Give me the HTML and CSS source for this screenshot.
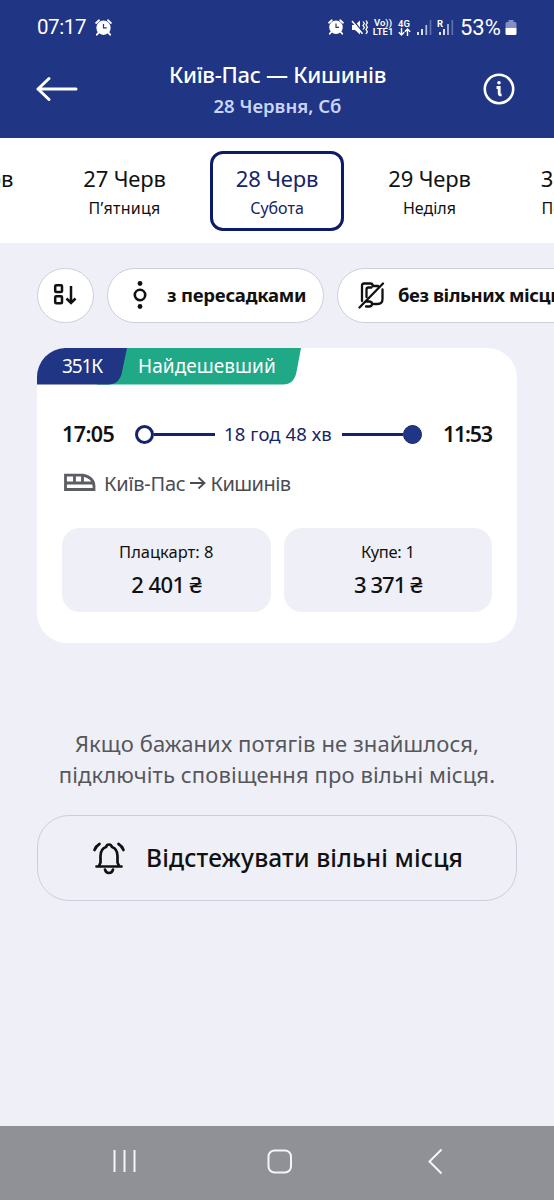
FILE: index.html
```html
<!DOCTYPE html>
<html lang="uk">
<head>
<meta charset="utf-8">
<title>Київ-Пас — Кишинів</title>
<link rel="stylesheet" href="styles.css">
</head>
<body>
<svg class="defs" width="0" height="0" aria-hidden="true">
  <symbol id="alarm" viewBox="0 0 18 18">
    <circle cx="9" cy="9.3" r="7.6" fill="#fff"/>
    <path d="M1.2 4.2 4.3 1.4M16.8 4.2 13.7 1.4M3.6 14.6 2 16.6M14.4 14.6 16 16.6" stroke="#fff" stroke-width="2" stroke-linecap="round"/>
    <path d="M9 5.200v4.300h3.400" fill="none" stroke="#203583" stroke-width="1.300"/>
  </symbol>
</svg>
<div class="screen">
  <header class="top">
    <div class="status">
      <span class="clock">07:17</span>
      <svg class="alarm" width="17" height="17"><use href="#alarm"/></svg>
      <div class="status-right">
        <svg width="16" height="16"><use href="#alarm"/></svg>
        <svg class="mute" width="17" height="17" viewBox="0 0 17 17">
          <path d="M1 6h3l5-4.500v14L4 11H1z" fill="#fff"/>
          <path d="M2 1 12 13.500" stroke="#203583" stroke-width="1.300"/>
          <path d="M1 2 11.500 14.800" stroke="#fff" stroke-width="1.500"/>
          <path d="M12 2.500l1.400 2-1.400 2 1.400 2-1.400 2M15 1.500l1.400 2.200L15 6l1.400 2.200L15 10.500l1.400 2.200L15 15" fill="none" stroke="#fff" stroke-width="1.300"/>
        </svg>
        <span class="mini lte"><b>Vo))</b><b>LTE1</b></span>
        <span class="mini net"><b>4G</b>
          <svg width="13" height="8" viewBox="0 0 13 8"><path d="M3.500 0v7M.8 4.300 3.500 7l2.700-2.700M9.500 8V1M6.800 3.700 9.500 1l2.700 2.700" fill="none" stroke="#fff" stroke-width="1.400"/></svg>
        </span>
        <svg class="signal" width="15" height="17" viewBox="0 0 15 17"><path d="M1 13v3M5 10v6" stroke="#fff" stroke-width="1.700"/><path d="M9.300 6v10" stroke="#b5bfe0" stroke-width="1.700"/><path d="M13.500 1v15" stroke="#5d70ae" stroke-width="1.700"/></svg>
        <svg class="roam" width="17" height="17" viewBox="0 0 17 17"><text x="0" y="8" class="r">R</text><path d="M3 13v3M7 10v6" stroke="#fff" stroke-width="1.700"/><path d="M11 5v11" stroke="#b5bfe0" stroke-width="1.700"/><path d="M15.300 1v15" stroke="#5d70ae" stroke-width="1.700"/></svg>
        <span class="percent">53%</span>
        <svg width="12" height="17" viewBox="0 0 12 17"><path d="M3.500 1h5v2H10a1.500 1.500 0 0 1 1.500 1.500V9H.5V4.500A1.500 1.500 0 0 1 2 3h1.500z" fill="#8190c8"/><path d="M.5 9h11v5.500a1.500 1.500 0 0 1-1.500 1.500H2a1.500 1.500 0 0 1-1.500-1.500z" fill="#fff"/></svg>
      </div>
    </div>
    <div class="nav">
      <svg class="back" width="42" height="26" viewBox="0 0 42 26"><path d="M40 13H2M13 2.500 2 13l11 10.500" fill="none" stroke="#fff" stroke-width="3" stroke-linecap="round" stroke-linejoin="round"/></svg>
      <div class="titles">
        <div class="title">Київ-Пас — Кишинів</div>
        <div class="subtitle">28 Червня, Сб</div>
      </div>
      <svg class="info" width="32" height="32" viewBox="0 0 32 32"><circle cx="16" cy="16" r="14.200" fill="none" stroke="#fff" stroke-width="2.600"/><circle cx="16" cy="9.800" r="1.800" fill="#fff"/><path d="M13.500 14.500h2.700v6.300q0 1.200 2.400 1" fill="none" stroke="#fff" stroke-width="2.800"/></svg>
    </div>
  </header>
  <nav class="dates">
    <div class="date"><span class="day">26 Черв</span><span class="week">Четвер</span></div>
    <div class="date"><span class="day">27 Черв</span><span class="week narrow">П’ятниця</span></div>
    <div class="date active"><span class="day">28 Черв</span><span class="week">Субота</span></div>
    <div class="date"><span class="day">29 Черв</span><span class="week">Неділя</span></div>
    <div class="date"><span class="day">30 Черв</span><span class="week">Понеділок</span></div>
  </nav>
  <div class="filters">
    <div class="chip sort"><svg width="24" height="24" viewBox="0 0 24 24" fill="none" stroke="#111" stroke-width="2.500"><rect x="2.200" y="2.200" width="6.800" height="6.800" rx="1"/><rect x="2.200" y="13.200" width="6.800" height="7" rx="1"/><path d="M18 3v17M13.500 15.500l4.500 4.500 4.500-4.500"/></svg></div>
    <div class="chip transfer"><svg width="14" height="30" viewBox="0 0 14 30"><circle cx="7" cy="15" r="5.200" fill="none" stroke="#111" stroke-width="2.600"/><circle cx="7" cy="3.500" r="2.400" fill="#111"/><circle cx="7" cy="26.500" r="2.400" fill="#111"/></svg><span>з пересадками</span></div>
    <div class="chip noseat"><svg width="28" height="28" viewBox="0 0 28 28" fill="none" stroke="#111" stroke-width="2.300" stroke-linecap="round" stroke-linejoin="round"><path d="M5 20V4.500Q5 2.500 7 2.500h6.500Q15.500 2.500 16 5h5M9.500 16V8.500Q9.500 6.500 11.500 6.500h3M25.500 8.500V18q0 5-5 5H16.500M8.500 20.500h3.500q3 0 3 2.500t-3 2.500H9M2.500 26.500 26 2.500"/></svg><span>без вільних місць</span></div>
  </div>
  <section class="card">
    <svg class="tagshape" width="264" height="37" viewBox="0 0 264 37"><path d="M60 0h204l-4.500 24Q257 36.500 246 36.500H60z" fill="#20a987"/><path d="M28 0h62l-5 24Q82.500 36.500 71 36.500H0V29A29 29 0 0 1 28 0z" fill="#203583"/></svg>
    <div class="tags"><span class="num">351К</span><span class="cheap">Найдешевший</span></div>
    <div class="trip">
      <span class="time">17:05</span>
      <i class="dot open"></i><i class="line"></i>
      <span class="dur">18 год 48 хв</span>
      <i class="line"></i><i class="dot"></i>
      <span class="time end">11:53</span>
    </div>
    <div class="route">
      <svg width="32" height="20" viewBox="0 0 32 20" fill="none" stroke="#5c5e63" stroke-width="2.800"><path d="M1.500 2.200H19Q30 4.500 30 13.500V16.500H1.500zM1.500 10H29.500M10.500 2v8M18.500 2v8"/></svg>
      <span class="from">Київ-Пас</span>
      <svg class="arrow" width="16" height="14" viewBox="0 0 16 14" fill="none" stroke="#4b4c51" stroke-width="1.800"><path d="M0 7h14.500M8.500 1.500 14.500 7l-6 5.500"/></svg>
      <span class="to">Кишинів</span>
    </div>
    <div class="seats">
      <div class="seat"><span class="kind">Плацкарт: 8</span><span class="price">2 401 ₴</span></div>
      <div class="seat"><span class="kind k2">Купе: 1</span><span class="price p2">3 371 ₴</span></div>
    </div>
  </section>
  <p class="note">Якщо бажаних потягів не знайшлося,<br>підключіть сповіщення про вільні місця.</p>
  <div class="watch">
    <svg width="34" height="34" viewBox="0 0 34 34" fill="none" stroke="#111" stroke-width="2.700" stroke-linecap="round" stroke-linejoin="round"><path d="M4.500 25.500h25M7 25l1.500-3.500V15Q8.500 8 14 6q.8-2.500 3-2.500t3 2.500Q25.500 8 25.500 15v6.500L27 25M13 28.500q.8 3.500 4 3.500t4-3.500M2.500 9Q4 5 7.500 3M31.500 9Q30 5 26.500 3"/></svg>
    <span>Відстежувати вільні місця</span>
  </div>
  <footer class="sys">
    <svg width="554" height="74" viewBox="0 0 554 74" fill="none" stroke="#f4f5f8"><path d="M114.500 24v22M124.500 24v22M134.500 24v22" stroke-width="2"/><rect x="268.500" y="24.500" width="22.500" height="22" rx="6" stroke-width="2"/><path d="M441.500 23.500 429.500 35.500l12 12" stroke-width="2"/></svg>
  </footer>
</div>
</body>
</html>
```
FILE: styles.css
```css
* { box-sizing: border-box; }
body { margin: 0; font-family: "Noto Sans", "Open Sans", sans-serif; color: #111; }
.defs { display: block; }
.screen { width: 554px; height: 1200px; overflow: hidden; background: #eff0f7; display: flex; flex-direction: column; white-space: nowrap; }
.screen svg { flex: none; display: block; }
.top { height: 138px; flex: none; background: #203583; color: #fff; }
.status { height: 54px; padding: 0 37px; display: flex; align-items: center; font-family: Roboto, sans-serif; }
.clock { font-size: 20.500px; letter-spacing: -0.4px; margin-right: 9px; }
.status-right { margin-left: auto; display: flex; align-items: center; }
.mute { margin: 0 5px 0 7px; }
.mini { display: flex; flex-direction: column; align-items: center; font-size: 9.500px; line-height: 9px; }
.mini b { font-weight: 600; }
.lte { width: 20px; }
.net { width: 14px; margin: 0 6px 0 4px; }
.roam { margin: 0 6px 0 5px; }
.r { font: 700 9.500px Roboto, sans-serif; fill: #fff; }
.percent { font-size: 22px; width: 42px; margin-right: 3px; }
.nav { height: 84px; padding: 0 39px 0 36px; display: grid; grid-template-columns: 1fr auto 1fr; align-items: start; }
.back { margin-top: 22px; }
.info { margin-top: 19px; justify-self: end; }
.titles { text-align: center; padding-left: 4px; }
.title { font-size: 22px; line-height: 30px; margin-top: 5px; font-weight: 500; letter-spacing: -0.26px; }
.subtitle { font-size: 18.500px; line-height: 26px; margin-top: 4px; font-weight: 600; color: #c9d4fa; }
.dates { height: 105px; flex: none; background: #fff; padding-top: 13px; display: flex; justify-content: center; gap: 18.500px; }
.date { flex: none; width: 134px; height: 80px; border-radius: 13px; display: flex; flex-direction: column; align-items: center; padding-top: 11px; }
.active { border: 3px solid #0c1c68; padding-top: 8px; color: #162468; }
.day { font-size: 22px; line-height: 32px; letter-spacing: -0.15px; }
.week { font-size: 16px; line-height: 24px; margin-top: 2px; }
.narrow { letter-spacing: 0.25px; }
.filters { padding: 24.500px 0 0 37px; display: flex; gap: 13px; flex: none; }
.chip { flex: none; height: 55.500px; border: 1.500px solid #cccedd; border-radius: 28px; background: #fff; display: flex; align-items: center; font-size: 18.500px; font-weight: 700; letter-spacing: -0.22px; }
.chip span { margin-top: -2px; }
.sort { width: 56.500px; padding-left: 15px; }
.transfer { width: 217.500px; padding-left: 25px; gap: 20.500px; }
.noseat { width: 260px; padding-left: 19px; gap: 13px; letter-spacing: -0.42px; }
.card { margin: 25px 37px 0; height: 295px; border-radius: 30px; background: #fff; flex: none; display: grid; grid-template-rows: 37px auto auto auto; align-content: start; }
.tagshape, .tags { grid-row: 1; grid-column: 1; }
.tags { display: flex; align-items: center; color: #fff; font-size: 19px; padding: 0 0 2px 25px; z-index: 1; }
.num { width: 76px; letter-spacing: -1.100px; }
.cheap { letter-spacing: 0.05px; }
.trip { margin: 33px 25px 0; height: 32px; display: flex; align-items: center; }
.time { font-size: 21.500px; font-weight: 600; width: 73px; letter-spacing: -0.6px; margin-top: -1px; }
.end { width: 49px; margin-left: 21px; letter-spacing: -1.300px; }
.dot { width: 19px; height: 19px; border-radius: 50%; background: #203583; border: 1px solid #15236c; flex: none; }
.open { background: #fff; border: 3px solid #14236c; }
.line { height: 3px; background: #15236c; flex: 1; }
.dur { font-size: 18.500px; color: #162468; margin: -1px 10px 0 9px; letter-spacing: 0.1px; }
.route { margin: 18px 27px 0; height: 30px; display: flex; align-items: center; font-size: 20px; color: #4b4c51; }
.from { margin: 0 0 0 8px; letter-spacing: -0.25px; }
.arrow { margin: 0 4px 0 5px; }
.to { letter-spacing: -0.55px; }
.seats { margin: 30px 25px 0; display: grid; grid-template-columns: 1fr 1fr; gap: 13px; }
.seat { height: 84px; border-radius: 18px; background: #eff0f7; display: flex; flex-direction: column; align-items: center; padding-top: 12px; }
.kind { font-size: 16.500px; line-height: 24px; }
.k2 { letter-spacing: -0.3px; }
.price { font-size: 22px; line-height: 32px; margin-top: 4px; font-weight: 500; letter-spacing: -0.6px; }
.p2 { letter-spacing: -0.9px; }
.note { margin: 85px 0 0; text-align: center; font-size: 22px; line-height: 30.500px; color: #56575d; letter-spacing: 0.1px; flex: none; }
.watch { margin: 26px 37px 0; height: 86px; flex: none; border: 1.500px solid #cccee0; border-radius: 32px; display: flex; align-items: center; padding-left: 54px; gap: 20px; font-size: 24.500px; font-weight: 500; letter-spacing: 0.13px; }
.watch span { margin-top: -2px; }
.sys { margin-top: auto; height: 74px; background: #909196; flex: none; }
```
